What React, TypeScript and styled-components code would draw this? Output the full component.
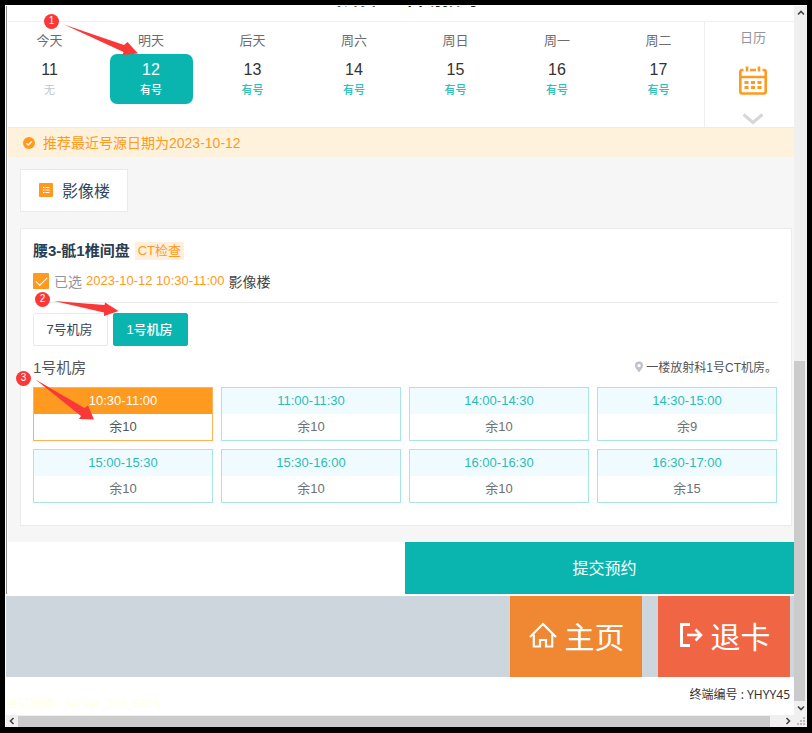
import React from "react";
import styled, { createGlobalStyle } from "styled-components";

const teal = "#0bb5af";
const orange = "#ff9a20";
const red = "#fb3838";

const GlobalStyle = createGlobalStyle`
  * { box-sizing: border-box; }
  body {
    margin: 0;
    background: #000;
    font-family: "Liberation Sans", "Noto Sans CJK SC", sans-serif;
    font-size: 13px;
    color: #555;
  }
  button { font: inherit; color: inherit; padding: 0; cursor: pointer; }
  h1, h2, h3, p { margin: 0; }
`;

const Window = styled.div`
  position: relative;
  display: grid;
  grid-template-columns: minmax(0, 1fr) 13px;
  grid-template-rows: 1fr auto;
  min-height: calc(100vh - 11px);
  margin: 5px 5px 6px;
  padding-left: 1px;
  background: #fff;
`;

const Page = styled.main`
  display: flex;
  flex-direction: column;
`;

const Frame = styled.section`
  display: flex;
  flex-direction: column;
  border-left: 1px solid #8f8f8f;
  padding-left: 1px;
  margin-top: 1px;
`;

const TitleBar = styled.header`
  display: flex;
  align-items: flex-end;
  justify-content: center;
  height: 16px;
  padding: 0 0 10px 10px;
  overflow: hidden;
  border-bottom: 1px solid #efeff2;
`;

const Title = styled.h1`
  font-size: 18px;
  line-height: 24px;
  color: #222;
  flex: none;
`;

const DateBar = styled.div`
  display: flex;
  height: 105px;
`;

const Days = styled.div`
  flex: 1;
  display: flex;
  justify-content: space-between;
  padding-right: 4px;
`;

const Day = styled.button`
  width: 83px;
  display: flex;
  flex-direction: column;
  border: 0;
  background: none;
`;

const DayName = styled.span`
  width: 100%;
  padding-top: 9px;
  line-height: 20px;
  height: 32px;
  color: #6b6b70;
`;

const DayBox = styled.span<{ $active?: boolean }>`
  width: 100%;
  height: 50px;
  display: flex;
  flex-direction: column;
  align-items: center;
  border-radius: 7px;
  padding-top: 6px;
  background: ${(p) => (p.$active ? teal : "transparent")};
  color: ${(p) => (p.$active ? "#fff" : "#333")};
`;

const DayNumber = styled.span`
  font-size: 16px;
  line-height: 20px;
`;

const DayState = styled.span<{ $tone: "none" | "open" | "active" }>`
  font-size: 11px;
  line-height: 20px;
  font-weight: ${(p) => (p.$tone === "none" ? 400 : 500)};
  color: ${(p) => (p.$tone === "none" ? "#c4c4d0" : p.$tone === "open" ? "#2fc0b8" : "#fff")};
`;

const CalendarButton = styled.button`
  width: 90px;
  display: flex;
  flex-direction: column;
  align-items: center;
  border: 0;
  border-left: 1px solid #efeff2;
  background: none;
  padding: 6px 0 0 7px;
  line-height: 20px;
  color: #94949c;

  svg { flex: none; margin-top: 18px; }
`;

const Notice = styled.p`
  display: flex;
  align-items: center;
  gap: 8px;
  height: 30px;
  padding-left: 15px;
  border-top: 1px solid #ebebeb;
  background: #fff2dc;
  color: ${orange};
  font-size: 14px;
  line-height: 20px;
`;

const Body = styled.div`
  display: flex;
  flex-direction: column;
  align-items: flex-start;
  gap: 16px;
  padding: 12px 2px 16px 12px;
  background: #f6f6f6;
`;

const Building = styled.button`
  display: flex;
  align-items: center;
  gap: 9px;
  height: 43px;
  padding: 0 17px 2px 18px;
  border: 1px solid #e9e9ee;
  background: #fff;
  color: #33475b;
  font-size: 16px;
`;

const Card = styled.section`
  width: 100%;
  padding: 12px 12px 22px;
  border: 1px solid #ebebee;
  background: #fff;
`;

const ExamHead = styled.div`
  display: flex;
  align-items: center;
  gap: 5px;
  height: 20px;
`;

const ExamName = styled.h2`
  font-size: 15px;
  line-height: 20px;
  color: #2b3d50;
`;

const Tag = styled.span`
  padding: 0 3px;
  line-height: 18px;
  background: #ffefdc;
  color: ${orange};
`;

const Picked = styled.label`
  display: flex;
  align-items: center;
  gap: 4px;
  height: 42px;
  padding-bottom: 2px;
  border-bottom: 1px solid #ebebeb;
  margin-right: 1px;
  color: #444;
  font-size: 14px;
`;

const Check = styled.input`
  appearance: none;
  width: 16px;
  height: 16px;
  margin: 0 1px 0 0;
  border-radius: 1px;
  background: ${orange};
  display: grid;
  place-items: center;

  &::after {
    content: "";
    width: 10px;
    height: 5px;
    border: solid #fff;
    border-width: 0 0 1px 1px;
    transform: translateY(-1px) rotate(-45deg);
  }
`;

const Muted = styled.span`
  color: #94949c;
`;

const PickedTime = styled.span`
  color: ${orange};
  font-size: 13px;
`;

const Rooms = styled.div`
  display: flex;
  gap: 5px;
  padding-top: 10px;
`;

const Room = styled.button<{ $active?: boolean }>`
  width: 75px;
  height: 33px;
  padding: 0 2px 2px 0;
  border: 1px solid ${(p) => (p.$active ? teal : "#e9e9ee")};
  border-radius: 2px;
  background: ${(p) => (p.$active ? teal : "#fff")};
  color: ${(p) => (p.$active ? "#fff" : "#33475b")};
  font-weight: ${(p) => (p.$active ? 500 : 400)};
`;

const RoomHead = styled.div`
  display: flex;
  align-items: center;
  justify-content: space-between;
  height: 41px;
  padding-right: 2px;
`;

const RoomName = styled.h3`
  font-size: 15px;
  font-weight: 400;
`;

const Place = styled.span`
  display: flex;
  align-items: center;
  gap: 2px;
  font-size: 12px;
`;

const Slots = styled.div`
  display: grid;
  grid-template-columns: repeat(4, minmax(0, 1fr));
  gap: 8px;
  padding-right: 2px;
`;

const Slot = styled.button<{ $active?: boolean }>`
  height: 54px;
  display: flex;
  flex-direction: column;
  border: 1px solid ${(p) => (p.$active ? "#ffb254" : "#a9e6e2")};
  background: #fff;
  color: ${(p) => (p.$active ? "#555" : "#707074")};
`;

const SlotTime = styled.span<{ $active?: boolean }>`
  width: 100%;
  line-height: 26px;
  background: ${(p) => (p.$active ? orange : "#f0fbff")};
  color: ${(p) => (p.$active ? "#fff" : "#2bbcb5")};
`;

const SlotLeft = styled.span`
  width: 100%;
  line-height: 26px;
`;

const SubmitBar = styled.div`
  display: flex;
  justify-content: flex-end;
  height: 52px;
`;

const Submit = styled.button`
  width: 49.5%;
  padding: 0 0 2px 10px;
  border: 0;
  background: ${teal};
  color: #fff;
  font-size: 16px;
`;

const Dock = styled.nav`
  display: flex;
  justify-content: flex-end;
  gap: 16px;
  height: 81px;
  margin-top: 2px;
  padding-right: 4px;
  background: #ced6dd;
`;

const DockButton = styled.button<{ $color: string }>`
  width: 132px;
  display: flex;
  align-items: center;
  justify-content: center;
  gap: 8px;
  padding: 0 0 3px 1px;
  border: 0;
  background: ${(p) => p.$color};
  color: #fff;
  font-size: 30px;
`;

const Status = styled.footer`
  display: flex;
  justify-content: space-between;
  height: 37px;
  padding: 8px 4px 0 0;
  font-family: "Noto Sans", "Noto Sans CJK SC", sans-serif;
  font-size: 12px;
  line-height: 20px;
  color: #333;
`;

const Server = styled.span`
  align-self: flex-end;
  color: #ffffe6;
`;

const VScroll = styled.div`
  display: flex;
  flex-direction: column;
  align-items: center;
  margin-top: 1px;
  background: #f0f0f0;
`;

const VThumb = styled.div`
  width: 11px;
  flex: 341;
  align-self: flex-start;
  background: #cbcbcb;
`;

const VSpace = styled.div`
  flex: 341;
`;

const ArrowCell = styled.span`
  display: grid;
  place-items: center;
  flex: none;
  width: 12px;
  height: 14px;
`;

const HScroll = styled.div`
  display: flex;
  align-items: center;
  height: 12px;
  background: #f0f0f0;
`;

const HThumb = styled.div`
  flex: 1;
  height: 11px;
  margin-right: 12px;
  background: #cbcbcb;
`;

const Corner = styled.div`
  display: grid;
  place-items: center;
  background: #f0f0f0;
`;

const Marker = styled.span<{ $x: number; $y: number }>`
  position: absolute;
  left: ${(p) => p.$x}px;
  top: ${(p) => p.$y}px;
  width: 15px;
  height: 15px;
  border-radius: 50%;
  background: ${red};
  color: #fff;
  font-size: 10px;
  line-height: 14px;
  text-align: center;
`;

const Arrow = styled.svg<{ $x: number; $y: number }>`
  position: absolute;
  left: ${(p) => p.$x}px;
  top: ${(p) => p.$y}px;
  fill: ${red};
  pointer-events: none;
`;

const days = [
  ["今天", "11", "无"],
  ["明天", "12", "有号"],
  ["后天", "13", "有号"],
  ["周六", "14", "有号"],
  ["周日", "15", "有号"],
  ["周一", "16", "有号"],
  ["周二", "17", "有号"],
];

const slots = [
  ["10:30-11:00", 10],
  ["11:00-11:30", 10],
  ["14:00-14:30", 10],
  ["14:30-15:00", 9],
  ["15:00-15:30", 10],
  ["15:30-16:00", 10],
  ["16:00-16:30", 10],
  ["16:30-17:00", 15],
];

const chevrons = {
  up: "M1 5.5 4 2.5 7 5.5",
  down: "M1 2.5 4 5.5 7 2.5",
  left: "M5.5 1 2.5 4 5.5 7",
  right: "M2.5 1 5.5 4 2.5 7",
};

function ScrollArrow({ dir }: { dir: keyof typeof chevrons }) {
  return (
    <ArrowCell>
      <svg width="8" height="8" viewBox="0 0 8 8" fill="none" stroke="#444" strokeWidth="1.6">
        <path d={chevrons[dir]} />
      </svg>
    </ArrowCell>
  );
}

export default function App() {
  return (
    <>
      <GlobalStyle />
      <Window>
        <Page>
          <Frame>
            <TitleBar>
              <Title>影像检查自助预约</Title>
            </TitleBar>
            <DateBar>
              <Days>
                {days.map(([name, num, state]) => {
                  const active = num === "12";
                  return (
                    <Day key={num}>
                      <DayName>{name}</DayName>
                      <DayBox $active={active}>
                        <DayNumber>{num}</DayNumber>
                        <DayState $tone={active ? "active" : state === "无" ? "none" : "open"}>{state}</DayState>
                      </DayBox>
                    </Day>
                  );
                })}
              </Days>
              <CalendarButton>
                日历
                <svg width="28" height="29" viewBox="0 0 28 29" fill="none" stroke="#ff9a20" strokeWidth="2.6">
                  <path d="M4.500 4H3Q1.300 4 1.300 6V25.500Q1.300 27.500 3 27.500H25Q26.700 27.500 26.700 25.500V6Q26.700 4 25 4H23.500M11 4H17M1 11H27M8 .5V5.500M20 .5V5.500" />
                  <path d="M5.500 16.500H9.500M12 16.500H16M18.500 16.500H22.500M5.500 21.500H9.500M12 21.500H16M18.500 21.500H22.500" strokeWidth="3" />
                </svg>
                <svg width="22" height="12" viewBox="0 0 22 12" fill="none" stroke="#d8d6da" strokeWidth="3">
                  <path d="M1.500 1.500 11 9.500 20.500 1.500" />
                </svg>
              </CalendarButton>
            </DateBar>
            <Notice>
              <svg width="12" height="12" viewBox="0 0 12 12">
                <circle cx="6" cy="6" r="6" fill="#ff9a20" />
                <path d="M3.300 6.200 5.300 8.100 8.900 4.300" fill="none" stroke="#fff2dc" strokeWidth="1.400" />
              </svg>
              推荐最近号源日期为2023-10-12
            </Notice>
            <Body>
              <Building>
                <svg width="14" height="14" viewBox="0 0 14 14">
                  <rect width="14" height="14" rx="1" fill="#ff9a20" />
                  <path d="M4 4.500H5.500M4 7H5.500M4 9.500H5.500M6.500 4.500H10.500M6.500 7H10.500M6.500 9.500H10.500" stroke="#fff" strokeWidth="1" />
                </svg>
                影像楼
              </Building>
              <Card>
                <ExamHead>
                  <ExamName>腰3-骶1椎间盘</ExamName>
                  <Tag>CT检查</Tag>
                </ExamHead>
                <Picked>
                  <Check type="checkbox" defaultChecked />
                  <Muted>已选</Muted>
                  <PickedTime>2023-10-12 10:30-11:00</PickedTime>
                  影像楼
                </Picked>
                <Rooms>
                  <Room>7号机房</Room>
                  <Room $active>1号机房</Room>
                </Rooms>
                <RoomHead>
                  <RoomName>1号机房</RoomName>
                  <Place>
                    <svg width="10" height="12" viewBox="0 0 10 12">
                      <path d="M5 11.500C2.500 8.300 1 6.500 1 4.500A4 4 0 0 1 9 4.500C9 6.500 7.500 8.300 5 11.500ZM5 2.900A1.700 1.700 0 1 0 5 6.300A1.700 1.700 0 1 0 5 2.900Z" fill="#c2c2cc" fillRule="evenodd" />
                    </svg>
                    一楼放射科1号CT机房。
                  </Place>
                </RoomHead>
                <Slots>
                  {slots.map(([time, left], i) => (
                    <Slot key={time} $active={i === 0}>
                      <SlotTime $active={i === 0}>{time}</SlotTime>
                      <SlotLeft>余{left}</SlotLeft>
                    </Slot>
                  ))}
                </Slots>
              </Card>
            </Body>
            <SubmitBar>
              <Submit>提交预约</Submit>
            </SubmitBar>
          </Frame>
          <Dock>
            <DockButton $color="#ef8733">
              <svg width="28" height="26" viewBox="0 0 28 26" fill="none" stroke="#fff" strokeWidth="2.200">
                <path d="M1 15 14 2 27 15M4.800 12.500V24.500H11V18H17V24.500H23.200V12.500" />
              </svg>
              主页
            </DockButton>
            <DockButton $color="#f06543">
              <svg width="24" height="26" viewBox="0 0 24 26" fill="none" stroke="#fff" strokeWidth="3">
                <path d="M11 2.500H2.500V23.500H11" />
                <path d="M8 13H22M16.500 7.500 22 13 16.500 18.500" strokeWidth="2.600" />
              </svg>
              退卡
            </DockButton>
          </Dock>
          <Status>
            <Server>当前服务：server_208_8805</Server>
            <span>终端编号 : YHYY45</span>
          </Status>
        </Page>
        <VScroll>
          <ScrollArrow dir="up" />
          <VSpace />
          <VThumb />
          <ScrollArrow dir="down" />
        </VScroll>
        <HScroll>
          <ScrollArrow dir="left" />
          <HThumb />
          <ScrollArrow dir="right" />
        </HScroll>
        <Corner>
          <svg width="8" height="8" viewBox="0 0 8 8" fill="#bbb">
            <path d="M6 0H8V2H6ZM3 3H5V5H3ZM6 3H8V5H6ZM0 6H2V8H0ZM3 6H5V8H3ZM6 6H8V8H6Z" />
          </svg>
        </Corner>
        <Marker $x={39} $y={9}>1</Marker>
        <Arrow $x={59} $y={19} width="75" height="32" viewBox="64 24 75 32">
          <path d="M64 24.500 124 45 127.500 42 138 53.500 122.500 55 123.500 52Z" />
        </Arrow>
        <Marker $x={30} $y={287}>2</Marker>
        <Arrow $x={49} $y={296} width="66" height="17" viewBox="54 301 66 17">
          <path d="M54 301 104.500 305 105 302.500 118.500 311 104 316 104 312.500Z" />
        </Arrow>
        <Marker $x={11} $y={366}>3</Marker>
        <Arrow $x={30} $y={374} width="60" height="42" viewBox="35 379 60 42">
          <path d="M35.500 379.500 84.500 408 88 405.500 94 419.500 79 419 81 416Z" />
        </Arrow>
      </Window>
    </>
  );
}
